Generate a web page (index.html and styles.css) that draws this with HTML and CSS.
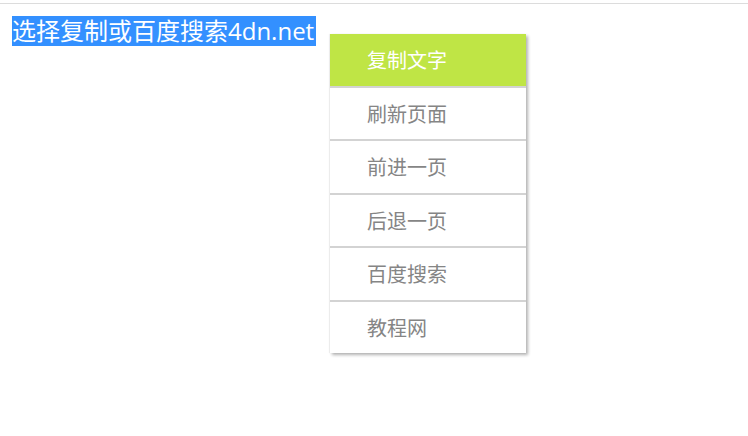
FILE: index.html
```html
<!DOCTYPE html>
<html lang="zh-CN">
<head>
<meta charset="utf-8">
<title>右键菜单</title>
<link rel="stylesheet" href="styles.css">
</head>
<body>
<div class="page">
  <p class="demo"><span class="selected">选择复制或百度搜索4dn.net</span></p>
</div>
<ul class="context-menu">
  <li class="item active">复制文字</li>
  <li class="item">刷新页面</li>
  <li class="item">前进一页</li>
  <li class="item">后退一页</li>
  <li class="item">百度搜索</li>
  <li class="item">教程网</li>
</ul>
</body>
</html>
```
FILE: styles.css
```css
html, body {
  margin: 0;
  padding: 0;
  background: #fff;
}
body {
  font-family: "Noto Sans CJK SC", "Noto Sans", sans-serif;
  width: 748px;
  height: 436px;
  overflow: hidden;
  position: relative;
}
.page {
  margin-top: 3px;
  border-top: 1px solid #dcdcdc;
  padding: 12px 0 0 12px;
}
.demo {
  margin: 0;
}
.selected {
  display: inline-block;
  background: #3390ff;
  color: #fff;
  font-family: "Open Sans", "Noto Sans CJK SC", sans-serif;
  font-size: 24px;
  line-height: 30px;
  height: 30px;
  padding-right: 2px;
}
.context-menu {
  position: absolute;
  left: 330px;
  top: 34px;
  width: 196px;
  margin: 0;
  padding: 0;
  list-style: none;
  background: #fff;
  box-shadow: 2px 2px 3px rgba(0, 0, 0, 0.3), -1px 0 1px rgba(0, 0, 0, 0.06);
}
.item {
  height: 51.5px;
  line-height: 51.5px;
  padding-left: 37px;
  font-size: 20px;
  color: #858585;
  border-bottom: 2px solid #d3d3d3;
}
.item:last-child {
  border-bottom: none;
}
.item.active {
  background: #bfe545;
  color: #fff;
}
```
